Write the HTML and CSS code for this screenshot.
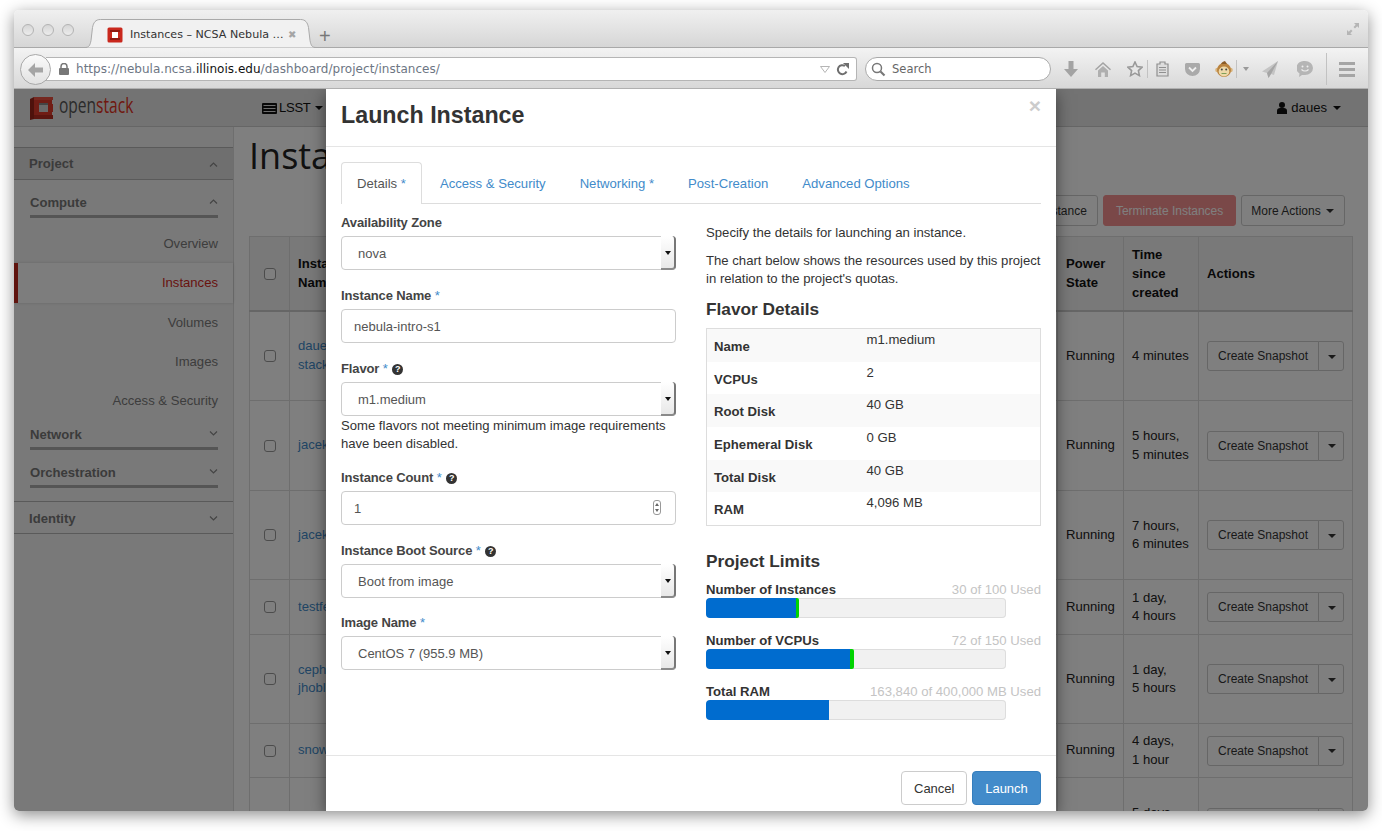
FILE: index.html
```html
<!DOCTYPE html>
<html lang="en">
<head>
<meta charset="UTF-8">
<title>Instances – NCSA Nebula</title>
<link rel="stylesheet" href="styles.css">
</head>
<body>
<div class="window">

  <!-- browser chrome -->
  <div class="titlebar">
    <div class="lights"><i></i><i></i><i></i></div>
    <div class="tab">
      <svg class="tab-shape" width="243" height="29" viewBox="0 0 243 29"><path d="M0 28.500h6c4 0 5-2 6-7l1.500-13c1-5 3-8 8-8h200c5 0 7 3 8 8l1.500 13c1 5 2 7 6 7h6" fill="#f1f1f1" stroke="#a9a9a9"/></svg>
      <svg class="favicon" width="16" height="16" viewBox="0 0 16 16"><rect width="15" height="15" x=".5" y=".5" rx="1.5" fill="#c9281d"/><rect x="5" y="5" width="6" height="6" fill="#fff"/><path d="M3 3h10v2H3zM3 11h10v2H3z" fill="#8f1a12"/></svg>
      <span class="tab-title">Instances – NCSA Nebula …</span>
      <span class="tab-close">✖</span>
    </div>
    <span class="tab-new">+</span>
    <svg class="fullscreen" width="14" height="14" viewBox="0 0 14 14" fill="#b5b5b5"><path d="M8 1h5v5l-1.800-1.700L9 6.500 7.500 5l2.200-2.200zM6 13H1V8l1.800 1.700L5 7.500 6.500 9l-2.200 2.200z"/></svg>
  </div>

  <div class="toolbar">
    <div class="back"><svg width="18" height="16" viewBox="0 0 18 16"><path d="M8 1 1 8l7 7V10.500h8v-5H8z" fill="#a5a5a5"/></svg></div>
    <div class="urlbar">
      <svg class="lock" width="10" height="12" viewBox="0 0 10 12"><path d="M2 5V3.500a3 3 0 0 1 6 0V5" fill="none" stroke="#777" stroke-width="1.500"/><rect y="5" width="10" height="7" rx="1" fill="#777"/></svg>
      <span class="url">https://nebula.ncsa.<b>illinois.edu</b>/dashboard/project/instances/</span>
      <svg class="url-drop" width="10" height="7" viewBox="0 0 10 7"><path d="M.5.500h9L5 6.500z" fill="none" stroke="#b5b5b5"/></svg>
      <svg class="reload" width="13" height="13" viewBox="0 0 13 13"><path d="M10.500 8.500A4.500 4.500 0 1 1 9 3" fill="none" stroke="#6f6f6f" stroke-width="2"/><path d="M7 0h6v6z" fill="#6f6f6f"/></svg>
    </div>
    <div class="searchbar">
      <svg width="15" height="15" viewBox="0 0 15 15"><circle cx="6" cy="6" r="4.500" fill="none" stroke="#777" stroke-width="1.500"/><path d="m9.500 9.500 4 4" stroke="#777" stroke-width="2.200"/></svg>
      <span>Search</span>
    </div>
    <div class="tools">
      <svg class="t-down" width="14" height="16" viewBox="0 0 14 16"><path d="M4.500 0h5v8H14l-7 8-7-8h4.500z" fill="#a3a3a3"/></svg>
      <svg class="t-home" width="16" height="15" viewBox="0 0 16 15"><path d="M8 0 0 7.200l1 1.100 7-6.200 7 6.200 1-1.100z" fill="#a3a3a3"/><path d="M3 8.500 8 4l5 4.500V15H9.800v-4.500H6.200V15H3z" fill="#afafaf"/></svg>
      <svg class="t-star" width="16" height="16" viewBox="0 0 16 16"><path d="m8 1 2.100 4.600 5 .6-3.700 3.400 1 5L8 12.100 3.600 14.600l1-5L.9 6.200l5-.6z" fill="#e6e6e6" stroke="#999" stroke-width="1.600"/></svg>
      <i class="t-sep"></i>
      <svg class="t-list" width="13" height="16" viewBox="0 0 13 16"><path d="M4 1h5v2h3v12H1V3h3z" fill="#ddd" stroke="#8f8f8f" stroke-width="1.200"/><path d="M3 6.500h7M3 9h7M3 11.500h7" stroke="#8f8f8f" stroke-width="1.200"/></svg>
      <svg class="t-pocket" width="15" height="13" viewBox="0 0 15 13"><path d="M1.500 0h12A1.500 1.500 0 0 1 15 1.500V6a7.500 7 0 0 1-15 0V1.500A1.500 1.500 0 0 1 1.500 0z" fill="#aaa"/><path d="m4 4.500 3.500 3.500L11 4.500" fill="none" stroke="#eee" stroke-width="1.800"/></svg>
      <svg class="t-monkey" width="18" height="17" viewBox="0 0 18 17"><circle cx="2.500" cy="9" r="2.300" fill="#d8b27a"/><circle cx="15.500" cy="9" r="2.300" fill="#d8b27a"/><circle cx="9" cy="9" r="7" fill="#b9833f"/><path d="M10 0c-2 .5-3 1-4 3h6z" fill="#8a5c28"/><ellipse cx="9" cy="10.500" rx="5.300" ry="5" fill="#edd9a8"/><circle cx="6.800" cy="8.500" r="1" fill="#444"/><circle cx="11.200" cy="8.500" r="1" fill="#444"/><path d="M6.500 12.500h5" stroke="#7fa05a"/></svg>
      <i class="t-sep"></i>
      <i class="t-caret"></i>
      <svg class="t-plane" width="16" height="17" viewBox="0 0 16 17"><path d="M16 0 0 10.500l5 1.500 1.500 5L9 13l3 1z" fill="#c4c4c4"/><path d="M16 0 5 12l1.500 5L9 13z" fill="#a5a5a5"/></svg>
      <svg class="t-chat" width="16" height="16" viewBox="0 0 16 16"><path d="M8 0a8 7 0 0 1 0 14H5l-3 2 .5-3.500A8 7 0 0 1 8 0z" fill="#b5b5b5"/><circle cx="5.500" cy="5.500" r="1" fill="#eee"/><circle cx="10.500" cy="5.500" r="1" fill="#eee"/><path d="M4.500 8.500c2 2 5 2 7 0" fill="none" stroke="#eee" stroke-width="1.200"/></svg>
      <i class="t-sep t-sep-tall"></i>
      <div class="t-menu"><i></i><i></i><i></i></div>
    </div>
  </div>

  <!-- horizon page, dimmed by the modal -->
  <div class="page">
    <header class="topbar">
      <div class="brand">
        <svg width="24" height="24" viewBox="0 0 24 24"><path d="M4 1h19v3h-1v4h1v8h-1v4h1v3H4z" fill="#e03a2b"/><path d="M4 1h19v3H4z" fill="#ea5040"/><path d="M0 3l4-2v22l-4 1z" fill="#9c2419"/><path d="M4 19h19v4H4z" fill="#b92c20"/><rect x="9" y="7" width="9" height="9" fill="#d4d4d4"/><path d="M9 7h9v2H9z" fill="#8a8a8a"/></svg>
        <span class="brand-name">open<em>stack</em></span>
      </div>
      <div class="project-pick">
        <svg width="15" height="11" viewBox="0 0 15 11"><rect width="15" height="11" rx="1" fill="#111"/><path d="M1.500 2.500h12M1.500 5.500h12M1.500 8.500h12" stroke="#ddd"/></svg>
        LSST <i class="caret"></i>
      </div>
      <div class="user-pick">
        <svg width="10" height="12" viewBox="0 0 10 12"><circle cx="5" cy="3" r="3" fill="#111"/><path d="M0 12V8.500C0 7 1.500 6 3 6h4c1.500 0 3 1 3 2.500V12z" fill="#111"/></svg>
        daues <i class="caret"></i>
      </div>
    </header>

    <div class="page-body">
      <nav class="sidebar">
        <div class="side-head side-head-open">Project <svg class="chev" width="9" height="5" viewBox="0 0 9 5"><path d="m1 4.500 3.500-3.500L8 4.500"/></svg></div>
        <div class="side-group">Compute <svg class="chev" width="9" height="5" viewBox="0 0 9 5"><path d="m1 4.500 3.500-3.500L8 4.500"/></svg></div>
        <ul class="side-list">
          <li>Overview</li>
          <li class="active">Instances</li>
          <li>Volumes</li>
          <li>Images</li>
          <li>Access &amp; Security</li>
        </ul>
        <div class="side-group side-group-first">Network <svg class="chev" width="9" height="5" viewBox="0 0 9 5"><path d="m1 .5 3.500 3.500L8 .5"/></svg></div>
        <div class="side-group">Orchestration <svg class="chev" width="9" height="5" viewBox="0 0 9 5"><path d="m1 .5 3.500 3.500L8 .5"/></svg></div>
        <div class="side-head">Identity <svg class="chev" width="9" height="5" viewBox="0 0 9 5"><path d="m1 .5 3.500 3.500L8 .5"/></svg></div>
      </nav>

      <main class="main">
        <h1 class="page-title">Instances</h1>
        <div class="actions-row">
          <button class="btn">Launch Instance</button>
          <button class="btn btn-danger">Terminate Instances</button>
          <button class="btn btn-more">More Actions <i class="caret"></i></button>
        </div>
        <table class="instances">
          <colgroup><col class="c-check"><col><col class="c-power"><col class="c-time"><col class="c-actions"></colgroup>
          <thead>
            <tr><th class="cell-check"><input type="checkbox"></th><th>Instance<br>Name</th><th>Power<br>State</th><th>Time<br>since<br>created</th><th>Actions</th></tr>
          </thead>
          <tbody>
            <tr class="row-90"><td class="cell-check"><input type="checkbox"></td><td><a>daues-<br>stack</a></td><td>Running</td><td>4 minutes</td><td><div class="split"><button>Create Snapshot</button><button class="split-caret"><i class="caret"></i></button></div></td></tr>
            <tr class="row-90"><td class="cell-check"><input type="checkbox"></td><td><a>jacek</a></td><td>Running</td><td>5 hours,<br>5 minutes</td><td><div class="split"><button>Create Snapshot</button><button class="split-caret"><i class="caret"></i></button></div></td></tr>
            <tr class="row-89"><td class="cell-check"><input type="checkbox"></td><td><a>jacek</a></td><td>Running</td><td>7 hours,<br>6 minutes</td><td><div class="split"><button>Create Snapshot</button><button class="split-caret"><i class="caret"></i></button></div></td></tr>
            <tr class="row-55"><td class="cell-check"><input type="checkbox"></td><td><a>testfe</a></td><td>Running</td><td>1 day,<br>4 hours</td><td><div class="split"><button>Create Snapshot</button><button class="split-caret"><i class="caret"></i></button></div></td></tr>
            <tr class="row-89"><td class="cell-check"><input type="checkbox"></td><td><a>ceph<br>jhobl</a></td><td>Running</td><td>1 day,<br>5 hours</td><td><div class="split"><button>Create Snapshot</button><button class="split-caret"><i class="caret"></i></button></div></td></tr>
            <tr class="row-54"><td class="cell-check"><input type="checkbox"></td><td><a>snow</a></td><td>Running</td><td>4 days,<br>1 hour</td><td><div class="split"><button>Create Snapshot</button><button class="split-caret"><i class="caret"></i></button></div></td></tr>
            <tr class="row-90"><td class="cell-check"><input type="checkbox"></td><td><a>snow</a></td><td>Running</td><td>5 days,<br>2 hours</td><td><div class="split"><button>Create Snapshot</button><button class="split-caret"><i class="caret"></i></button></div></td></tr>
          </tbody>
        </table>
      </main>
    </div>

    <div class="backdrop"></div>

    <div class="modal">
      <div class="modal-header">
        <h2>Launch Instance</h2>
        <span class="modal-close">×</span>
      </div>
      <div class="modal-body">
        <ul class="tabs">
          <li class="active">Details <b>*</b></li>
          <li>Access &amp; Security</li>
          <li>Networking <b>*</b></li>
          <li>Post-Creation</li>
          <li>Advanced Options</li>
        </ul>
        <div class="columns">
          <form class="col-form">
            <div class="field">
              <label>Availability Zone</label>
              <div class="select-wrap"><select><option>nova</option></select><span class="select-arrow"></span></div>
            </div>
            <div class="field">
              <label>Instance Name <b>*</b></label>
              <input class="control" type="text" value="nebula-intro-s1">
            </div>
            <div class="field field-14">
              <label>Flavor <b>*</b> <i class="help">?</i></label>
              <div class="select-wrap"><select><option>m1.medium</option></select><span class="select-arrow"></span></div>
              <p class="hint">Some flavors not meeting minimum image requirements have been disabled.</p>
            </div>
            <div class="field">
              <label>Instance Count <b>*</b> <i class="help">?</i></label>
              <div class="select-wrap"><input class="control" type="text" value="1"><span class="spinner"></span></div>
            </div>
            <div class="field field-14">
              <label>Instance Boot Source <b>*</b> <i class="help">?</i></label>
              <div class="select-wrap"><select><option>Boot from image</option></select><span class="select-arrow"></span></div>
            </div>
            <div class="field">
              <label>Image Name <b>*</b></label>
              <div class="select-wrap"><select><option>CentOS 7 (955.9 MB)</option></select><span class="select-arrow"></span></div>
            </div>
          </form>
          <div class="col-info">
            <p>Specify the details for launching an instance.</p>
            <p>The chart below shows the resources used by this project in relation to the project's quotas.</p>
            <h3>Flavor Details</h3>
            <table class="flavor">
              <tr><th>Name</th><td>m1.medium</td></tr>
              <tr><th>VCPUs</th><td>2</td></tr>
              <tr><th>Root Disk</th><td>40 GB</td></tr>
              <tr><th>Ephemeral Disk</th><td>0 GB</td></tr>
              <tr><th>Total Disk</th><td>40 GB</td></tr>
              <tr><th>RAM</th><td>4,096 MB</td></tr>
            </table>
            <h3 class="limits-title">Project Limits</h3>
            <div class="quota">
              <div class="quota-label"><strong>Number of Instances</strong><span>30 of 100 Used</span></div>
              <div class="bar"><div class="bar-used" style="width:90px"></div><div class="bar-new" style="width:3px"></div></div>
            </div>
            <div class="quota">
              <div class="quota-label"><strong>Number of VCPUs</strong><span>72 of 150 Used</span></div>
              <div class="bar"><div class="bar-used" style="width:144px"></div><div class="bar-new" style="width:4px"></div></div>
            </div>
            <div class="quota">
              <div class="quota-label"><strong>Total RAM</strong><span>163,840 of 400,000 MB Used</span></div>
              <div class="bar"><div class="bar-used" style="width:123px"></div></div>
            </div>
          </div>
        </div>
      </div>
      <div class="modal-footer">
        <button class="btn btn-cancel">Cancel</button>
        <button class="btn btn-primary">Launch</button>
      </div>
    </div>
  </div>
</div>
</body>
</html>
```

FILE: styles.css
```css
* {
  box-sizing: border-box;
}
html, body {
  height: 100%;
  margin: 0;
  overflow: hidden;
}
body {
  background: #fff;
  padding: 10px 14px 20px;
  font-family: "Liberation Sans", Arial, sans-serif;
  font-size: 13.1px;
  line-height: 18.5px;
  color: #333;
}
ul {
  list-style: none;
  margin: 0;
  padding: 0;
}
.window {
  height: 801px;
  display: flex;
  flex-direction: column;
  border-radius: 5px;
  box-shadow: 0 4px 16px rgba(0, 0, 0, 0.45);
  overflow: hidden;
}

/* browser chrome */
.titlebar {
  height: 38px;
  display: flex;
  align-items: flex-end;
  background: linear-gradient(#f0f0f0, #d6d6d6);
  border-bottom: 1px solid #a9a9a9;
  position: relative;
  flex: none;
}
.lights {
  display: flex;
  gap: 8px;
  padding: 0 0 11px 8px;
}
.lights i {
  width: 12px;
  height: 12px;
  border-radius: 50%;
  border: 1px solid #b3b3b3;
  background: linear-gradient(#d6d6d6, #ececec);
}
.tab {
  position: relative;
  width: 243px;
  height: 29px;
  margin: 0 0 -1px 5px;
  display: flex;
  align-items: center;
  padding: 3px 0 0 28px;
  font-family: "DejaVu Sans", sans-serif;
}
.tab-shape {
  position: absolute;
  left: 0;
  top: 0;
}
.favicon {
  position: relative;
  flex: none;
}
.tab-title {
  position: relative;
  margin-left: 7px;
  font-size: 11.1px;
  color: #333;
  width: 152px;
  white-space: nowrap;
}
.tab-close {
  position: relative;
  font-size: 10px;
  color: #a5a5a5;
  margin-left: 6px;
}
.tab-new {
  font-size: 20px;
  line-height: 20px;
  color: #777;
  margin: 0 0 1px -3px;
}
.fullscreen {
  margin: 0 8px 11px auto;
}
.toolbar {
  height: 41px;
  flex: none;
  display: flex;
  align-items: center;
  padding: 2px 0 0 32px;
  background: linear-gradient(#f3f3f3, #d8d8d8);
  border-bottom: 1px solid #b0b0b0;
  position: relative;
}
.back {
  position: absolute;
  left: 6px;
  top: 6px;
  width: 31px;
  height: 31px;
  border-radius: 50%;
  border: 1px solid #a9a9a9;
  background: linear-gradient(#fafafa, #e2e2e2);
  display: flex;
  align-items: center;
  justify-content: center;
}
.urlbar {
  width: 811px;
  height: 24px;
  display: flex;
  align-items: center;
  background: #fff;
  border: 1px solid #b5b5b5;
  border-left: 0;
  border-radius: 0 3px 3px 0;
  padding-left: 13px;
}
.lock {
  flex: none;
}
.url {
  margin-left: 7px;
  padding-top: 1px;
  font-family: "DejaVu Sans", sans-serif;
  font-size: 12px;
  letter-spacing: 0.03px;
  color: #6d7684;
  white-space: nowrap;
}
.url b {
  font-weight: normal;
  color: #111;
}
.url-drop {
  margin-left: auto;
}
.reload {
  margin: 0 7px 0 6px;
}
.searchbar {
  width: 186px;
  height: 24px;
  margin-left: 8px;
  display: flex;
  align-items: center;
  gap: 6px;
  padding-left: 5px;
  background: #fff;
  border: 1px solid #a9a9a9;
  border-radius: 12px;
  font-family: "DejaVu Sans", sans-serif;
  font-size: 11.5px;
  color: #666;
}
.searchbar span {
  padding-top: 1px;
}
.tools {
  flex: 1;
  display: flex;
  align-items: center;
  height: 100%;
}
.tools svg {
  flex: none;
}
.t-down { margin-left: 13px; }
.t-home { margin-left: 17px; }
.t-star { margin-left: 16px; }
.t-sep {
  width: 1px;
  height: 18px;
  background: #c2c2c2;
  flex: none;
}
.tools .t-star + .t-sep { margin-left: 4px; }
.tools .t-list { margin-left: 8px; }
.tools .t-pocket { margin-left: 16px; }
.tools .t-monkey { margin-left: 15px; }
.t-monkey + .t-sep { margin-left: 3px; }
.t-caret {
  border: 3px solid transparent;
  border-top: 4px solid #9a9a9a;
  border-bottom: 0;
  margin-left: 6px;
}
.tools .t-plane { margin-left: 13px; }
.tools .t-chat { margin-left: 19px; }
.t-sep-tall {
  height: 32px;
  margin-left: 13px;
}
.t-menu {
  margin-left: 12px;
  display: flex;
  flex-direction: column;
  gap: 3px;
}
.t-menu i {
  display: block;
  width: 16px;
  height: 3px;
  background: #a5a5a5;
}

/* horizon page */
.page {
  position: relative;
  flex: 1;
  min-height: 0;
  background: #fff;
  overflow: hidden;
}
.topbar {
  height: 38px;
  display: flex;
  align-items: center;
  background: #e6e6e6;
  border-bottom: 1px solid #ccc;
  color: #111;
  padding: 1px 0 0 16px;
}
.brand {
  display: flex;
  align-items: center;
  width: 232px;
  gap: 5px;
}
.brand-name {
  font-family: "Open Sans", sans-serif;
  font-size: 21px;
  color: #555;
  display: inline-block;
  transform: scaleX(0.74);
  transform-origin: left center;
  margin-top: -5px;
}
.brand-name em {
  font-style: normal;
  color: #e03020;
}
.project-pick {
  display: flex;
  align-items: center;
  gap: 2px;
  letter-spacing: -0.3px;
}
.user-pick {
  margin-left: auto;
  margin-right: 27px;
  display: flex;
  align-items: center;
  gap: 4px;
}
.caret {
  display: inline-block;
  width: 0;
  height: 0;
  margin-left: 2px;
  vertical-align: middle;
  border-top: 4px solid currentColor;
  border-left: 4px solid transparent;
  border-right: 4px solid transparent;
}
.page-body {
  display: flex;
  height: 684px;
}
.sidebar {
  width: 220px;
  flex: none;
  padding-top: 20px;
  background: #f2f2f2;
  border-right: 1px solid #dcdcdc;
  color: #777;
  font-weight: bold;
}
.side-head {
  height: 33px;
  padding: 2px 15px 0;
  display: flex;
  align-items: center;
  justify-content: space-between;
  border-top: 1px solid #b5b5b5;
  border-bottom: 1px solid #b5b5b5;
  margin-top: 13px;
}
.side-head-open {
  margin-top: 0;
  background: #dedede;
}
.side-group {
  height: 30px;
  margin: 8px 15px 0 16px;
  padding-top: 6px;
  display: flex;
  justify-content: space-between;
  border-bottom: 3px solid #aaa;
}
.side-group .chev {
  margin-top: 5px;
}
.side-group-first {
  margin-top: 0;
}
.chev {
  fill: none;
  stroke: #888;
  stroke-width: 1.2;
  flex: none;
}
.side-list {
  margin-top: 6px;
  font-weight: normal;
  color: #7a7a7a;
  text-align: right;
}
.side-list li {
  height: 39.25px;
  line-height: 39px;
  padding-right: 15px;
}
.side-list .active {
  background: #fafafa;
  color: #d2291d;
  border-left: 4px solid #c0281c;
  box-shadow: 0 0 3px rgba(0, 0, 0, 0.15);
}
.main {
  flex: 1;
  min-width: 0;
  padding: 0 15px;
}
.page-title {
  margin: 0;
  height: 68px;
  padding-top: 5px;
  font-family: "Open Sans", sans-serif;
  font-size: 36px;
  font-weight: normal;
  line-height: 48px;
  color: #222;
}
.actions-row {
  display: flex;
  justify-content: flex-end;
  gap: 5px;
  padding-right: 8px;
  height: 41px;
}
.btn {
  height: 31px;
  padding: 0 10px;
  background: #fff;
  border: 1px solid #ccc;
  border-radius: 3px;
  font: 12px "Liberation Sans", Arial, sans-serif;
  color: #333;
}
.btn-more {
  padding: 0 10px 0 9px;
}
.btn-danger {
  background: #f59090;
  border-color: #f59090;
  color: #fff;
  padding: 0 12px;
}
.instances {
  width: 100%;
  table-layout: fixed;
  border-collapse: collapse;
}
.instances td, .instances th {
  border: 1px solid #ddd;
  padding: 0 8px;
  text-align: left;
  vertical-align: middle;
}
.instances thead th {
  height: 74px;
  background: #f2f2f2;
  border-bottom: 2px solid #ccc;
  color: #111;
  line-height: 19px;
}
.instances td {
  color: #222;
}
.instances a {
  color: #428bca;
}
.c-check { width: 40px; }
.c-power { width: 66px; }
.c-time { width: 75px; }
.c-actions { width: 154px; }
.instances .cell-check {
  padding: 0;
  text-align: center;
}
.cell-check input {
  appearance: none;
  width: 12px;
  height: 12px;
  margin: 0;
  vertical-align: middle;
  background: #fff;
  border: 1px solid #999;
  border-radius: 3px;
}
.row-90 { height: 90px; }
.row-89 { height: 89px; }
.row-55 { height: 55px; }
.row-54 { height: 54px; }
.split {
  display: flex;
  width: 137px;
  height: 30px;
}
.split button {
  flex: 1;
  padding: 0;
  background: #fff;
  border: 1px solid #ccc;
  border-radius: 3px 0 0 3px;
  font: 12px "Liberation Sans", Arial, sans-serif;
  color: #333;
}
.split .split-caret {
  flex: none;
  width: 26px;
  margin-left: -1px;
  border-radius: 0 3px 3px 0;
}

/* dim layer and modal */
.backdrop {
  position: absolute;
  inset: 0;
  background: rgba(0, 0, 0, 0.5);
}
.modal {
  position: absolute;
  left: 312px;
  top: 0;
  bottom: 0;
  width: 730px;
  display: flex;
  flex-direction: column;
  background: #fff;
  box-shadow: 0 5px 15px rgba(0, 0, 0, 0.5);
}
.modal-header {
  height: 58px;
  flex: none;
  padding: 0 15px;
  display: flex;
  align-items: center;
  justify-content: space-between;
  border-bottom: 1px solid #e5e5e5;
}
.modal-header h2 {
  margin: 0 0 6px;
  font-size: 23.25px;
  line-height: 52px;
  font-weight: bold;
  color: #333;
}
.modal-close {
  font-size: 21px;
  font-weight: bold;
  color: #ccc;
  margin-top: -22px;
}
.modal-body {
  flex: 1;
  min-height: 0;
  padding: 15px 15px 0;
}
.tabs {
  display: flex;
  height: 42px;
  border-bottom: 1px solid #ddd;
  font-size: 13.14px;
}
.tabs li {
  height: 42px;
  padding: 12px 15px 0;
  margin-right: 2px;
  border: 1px solid transparent;
  border-bottom: 0;
  color: #428bca;
  white-space: nowrap;
}
.tabs b {
  font-weight: normal;
}
.tabs .active {
  background: #fff;
  border-color: #ddd;
  border-radius: 4px 4px 0 0;
  color: #555;
}
.tabs .active b {
  color: #428bca;
}
.columns {
  display: flex;
  gap: 30px;
}
.col-form {
  width: 335px;
  padding-top: 8px;
}
.col-info {
  width: 335px;
  padding-top: 20px;
  font-size: 13.15px;
}
.field {
  margin-bottom: 15px;
}
.field-14 { margin-bottom: 14px; }
label {
  display: block;
  height: 20px;
  line-height: 22px;
  margin-bottom: 4px;
  font-size: 13px;
  font-weight: bold;
  letter-spacing: -0.12px;
  color: #444;
}
label b {
  color: #428bca;
  font-weight: normal;
}
.help {
  display: inline-block;
  width: 11px;
  height: 11px;
  margin-left: 1px;
  border-radius: 50%;
  background: #333;
  color: #fff;
  font-size: 9px;
  font-style: normal;
  line-height: 11px;
  text-align: center;
  vertical-align: 1px;
}
.control, select {
  display: block;
  width: 100%;
  height: 34px;
  padding: 0 12px;
  background: #fff;
  border: 1px solid #ccc;
  border-radius: 4px;
  font: 13px "Liberation Sans", Arial, sans-serif;
  color: #555;
  appearance: none;
}
select {
  padding-left: 16px;
}
.select-wrap {
  position: relative;
}
.select-arrow {
  position: absolute;
  right: 0;
  top: 0;
  bottom: 0;
  width: 15px;
  background: linear-gradient(#fff, #e8e8e8);
  border-right: 2px solid #777;
  border-bottom: 2px solid #8a8a8a;
  border-radius: 0 4px 4px 0;
}
.select-arrow::after {
  content: "";
  position: absolute;
  left: 4px;
  top: 15px;
  border-top: 4px solid #111;
  border-left: 3px solid transparent;
  border-right: 3px solid transparent;
}
.spinner {
  position: absolute;
  right: 15px;
  top: 9px;
  width: 8px;
  height: 15px;
  border: 1px solid #999;
  border-radius: 3px;
}
.spinner::before {
  content: "";
  position: absolute;
  left: 1px;
  top: 2px;
  border-bottom: 3px solid #666;
  border-left: 2px solid transparent;
  border-right: 2px solid transparent;
}
.spinner::after {
  content: "";
  position: absolute;
  left: 1px;
  bottom: 2px;
  border-top: 3px solid #666;
  border-left: 2px solid transparent;
  border-right: 2px solid transparent;
}
.hint {
  margin: 1px 0 0;
  line-height: 18px;
  color: #333;
}
.col-info p {
  margin: 0 0 10px;
  line-height: 18px;
  color: #333;
}
.col-info h3 {
  margin: 0;
  height: 30px;
  font-size: 17.25px;
  line-height: 22px;
  color: #333;
}
.flavor {
  width: 100%;
  height: 198px;
  border-collapse: collapse;
  border: 1px solid #ddd;
  table-layout: fixed;
}
.flavor tr:nth-child(odd) {
  background: #f9f9f9;
}
.flavor th {
  width: 160px;
  padding: 4px 7px 0;
  text-align: left;
  vertical-align: middle;
  color: #333;
}
.flavor td {
  padding: 2px 0 0;
  vertical-align: top;
  color: #333;
}
.col-info .limits-title {
  margin-top: 26px;
  height: 28px;
  line-height: 18px;
}
.quota {
  height: 51px;
}
.quota-label {
  display: flex;
  justify-content: space-between;
  height: 18px;
  line-height: 20px;
  color: #c4c4c4;
}
.quota-label strong {
  color: #333;
}
.bar {
  width: 300px;
  height: 20px;
  display: flex;
  background: #f1f1f1;
  box-shadow: inset 0 0 0 1px #ddd;
  border-radius: 4px;
  overflow: hidden;
}
.bar-used {
  background: #006ccf;
  border-radius: 3px 0 0 3px;
}
.bar-new {
  background: #00d300;
  border-radius: 0 2px 2px 0;
}
.modal-footer {
  flex: none;
  height: 56px;
  padding: 15px;
  display: flex;
  justify-content: flex-end;
  gap: 5px;
  border-top: 1px solid #e5e5e5;
}
.modal-footer .btn {
  height: 34px;
  font-size: 13px;
  padding: 0 12px;
  border-radius: 4px;
}
.btn-cancel {
  width: 66px;
}
.modal-footer .btn-primary {
  width: 69px;
  background: #428bca;
  border-color: #357ebd;
  color: #fff;
}
```
